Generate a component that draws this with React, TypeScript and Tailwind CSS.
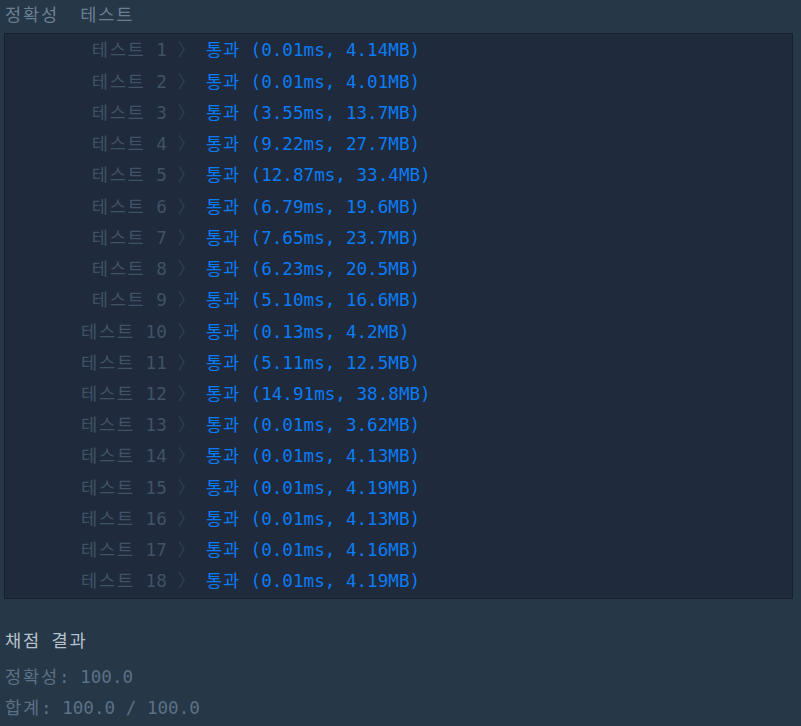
const results = [
  ["0.01ms", "4.14MB"],
  ["0.01ms", "4.01MB"],
  ["3.55ms", "13.7MB"],
  ["9.22ms", "27.7MB"],
  ["12.87ms", "33.4MB"],
  ["6.79ms", "19.6MB"],
  ["7.65ms", "23.7MB"],
  ["6.23ms", "20.5MB"],
  ["5.10ms", "16.6MB"],
  ["0.13ms", "4.2MB"],
  ["5.11ms", "12.5MB"],
  ["14.91ms", "38.8MB"],
  ["0.01ms", "3.62MB"],
  ["0.01ms", "4.13MB"],
  ["0.01ms", "4.19MB"],
  ["0.01ms", "4.13MB"],
  ["0.01ms", "4.16MB"],
  ["0.01ms", "4.19MB"],
];

const mono = "font-['DejaVu_Sans_Mono','Noto_Sans_CJK_KR',monospace]";

// hangul in the reference sits on a slightly wider pitch
function K({ children }: { children: React.ReactNode }) {
  return <span className="tracking-[1.8px]">{children}</span>;
}

export default function App() {
  return (
    <div className={`min-h-[726px] w-[801px] bg-[#263747] text-[17.6px] ${mono}`}>
      {/* Heading */}
      <div className="pl-[5px] leading-[30px] text-[#6b7f93] whitespace-pre">
        <K>정확성</K>  <K>테스트</K>
      </div>

      {/* Result table */}
      <div className="ml-[4px] mr-[8px] mt-[3px] border border-[#17202d] bg-[#1f2a3c] pt-[1px] pb-[1px]">
        {results.map(([t, m], i) => (
          <div key={i} className="flex h-[31.24px] items-center whitespace-pre">
            <span className="w-[190px] text-right text-[#405366]">
              <K>테스트</K> {i + 1} <span className="text-[#2f3f53]">〉</span>
            </span>
            <span className="ml-[11px] text-[#0b7cf5]">
              <span className="tracking-[0.8px]">통과</span> ({t}, {m})
            </span>
          </div>
        ))}
      </div>

      {/* Summary */}
      <div className="mt-[27px] pl-[5px] whitespace-pre">
        <div className="leading-[31px] text-[#b5c1cc]">
          <K>채점</K> <K>결과</K>
        </div>
        <div className="mt-[5px] leading-[31px] text-[#5b7186]">
          <K>정확성</K>: 100.0
        </div>
        <div className="leading-[31px] text-[#5b7186]">
          <K>합계</K>: 100.0 / 100.0
        </div>
      </div>
    </div>
  );
}
